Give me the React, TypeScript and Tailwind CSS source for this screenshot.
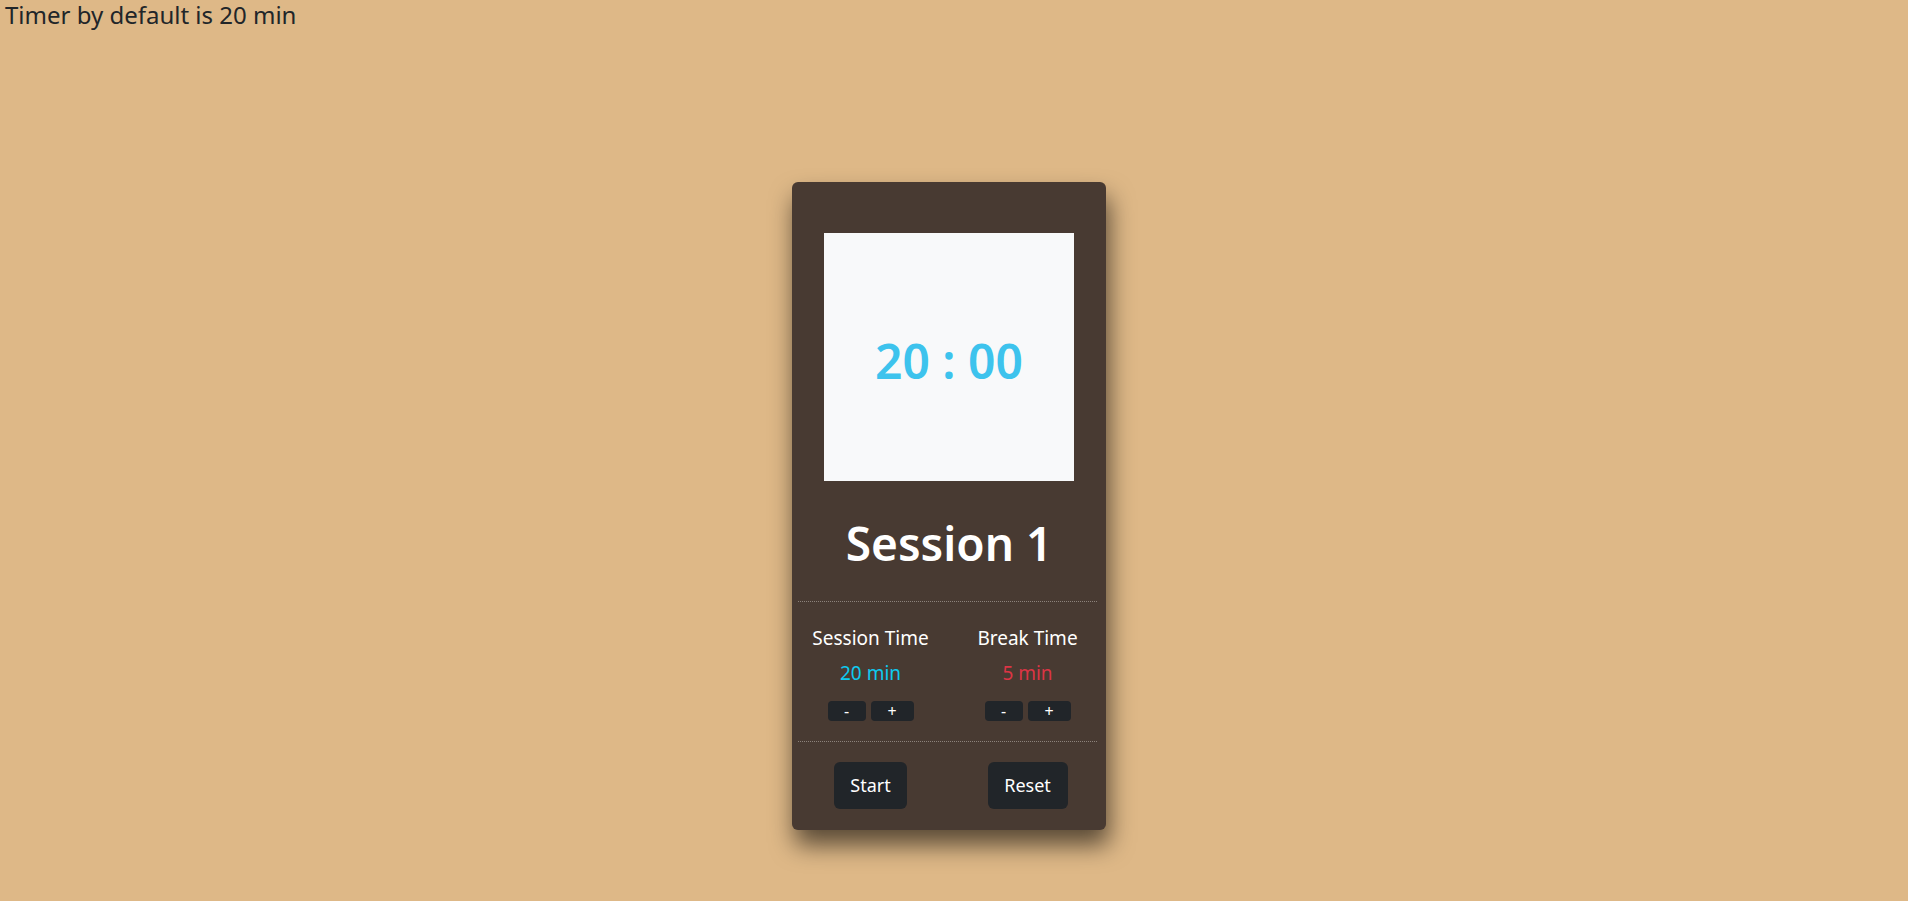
import React from "react";

export default function App() {
  const font = { fontFamily: '"Noto Sans", "Open Sans", sans-serif' };
  return (
    <div className="min-h-[901px] bg-[#deb887] text-[#212529]" style={font}>
      <div className="px-[5px] text-[24px] leading-[29px]">Timer by default is 20 min</div>
      <div className="flex justify-center pr-[10px] pt-[153px]">
        <div className="w-[314px] h-[648px] rounded-[6px] bg-[#483a32] text-white shadow-[3px_15px_24px_rgba(0,0,0,0.6)] pt-[51px]">
          <div className="mx-auto w-[250px] h-[248px] bg-[#f8f9fa] flex items-center justify-center pt-[8px]">
            <span className="text-[48px] font-semibold text-[#3dc3ed] leading-none">20 : 00</span>
          </div>
          <div className="mt-[33px] text-center text-[46px] font-semibold leading-[58px]">Session 1</div>
          <div className="mt-[29px] mx-[6px] mr-[9px] border-t border-dotted border-[#8c827b]" />
          <div className="grid grid-cols-2 text-center">
            <div className="flex flex-col items-center">
              <div className="mt-[24px] text-[19px] leading-[24px]">Session Time</div>
              <div className="mt-[11px] text-[19px] leading-[24px] text-[#0dcaf0]">20 min</div>
              <div className="mt-[16px] flex gap-[5px] text-[16px]">
                <button className="w-[38px] h-[20px] rounded-[4px] bg-[#212529] text-white leading-[20px]">-</button>
                <button className="w-[43px] h-[20px] rounded-[4px] bg-[#212529] text-white leading-[20px]">+</button>
              </div>
            </div>
            <div className="flex flex-col items-center">
              <div className="mt-[24px] text-[19px] leading-[24px]">Break Time</div>
              <div className="mt-[11px] text-[19px] leading-[24px] text-[#dc3545]">5 min</div>
              <div className="mt-[16px] flex gap-[5px] text-[16px]">
                <button className="w-[38px] h-[20px] rounded-[4px] bg-[#212529] text-white leading-[20px]">-</button>
                <button className="w-[43px] h-[20px] rounded-[4px] bg-[#212529] text-white leading-[20px]">+</button>
              </div>
            </div>
          </div>
          <div className="mt-[20px] mx-[6px] mr-[9px] border-t border-dotted border-[#8c827b]" />
          <div className="grid grid-cols-2 mt-[20px]">
            <div className="flex justify-center">
              <button className="h-[47px] w-[73px] rounded-[6px] bg-[#212529] text-white text-[18px]">Start</button>
            </div>
            <div className="flex justify-center">
              <button className="h-[47px] w-[80px] rounded-[6px] bg-[#212529] text-white text-[18px]">Reset</button>
            </div>
          </div>
        </div>
      </div>
    </div>
  );
}
